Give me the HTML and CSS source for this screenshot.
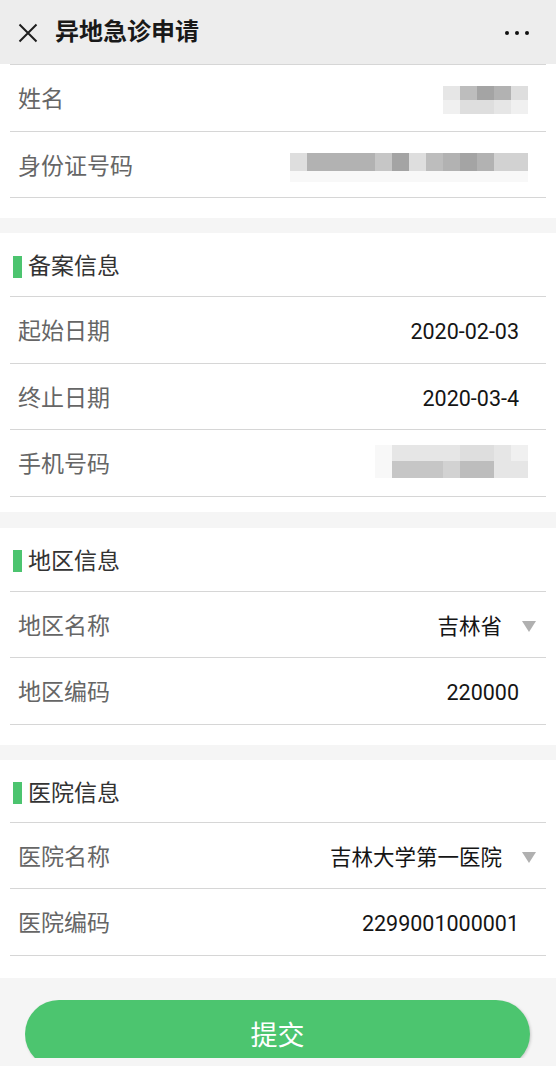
FILE: index.html
```html
<!DOCTYPE html>
<html lang="zh-CN">
<head>
<meta charset="utf-8">
<title>异地急诊申请</title>
<link rel="stylesheet" href="styles.css">
</head>
<body>
<div class="page">
  <header class="topbar">
    <svg class="close" width="20" height="20" viewBox="0 0 20 20"><path d="M1.5 1.5 L18.5 18.5 M18.5 1.5 L1.5 18.5" stroke="#1e1e1e" stroke-width="2" fill="none"/></svg>
    <h1 class="title">异地急诊申请</h1>
    <div class="more"><span class="dot"></span><span class="dot"></span><span class="dot"></span></div>
  </header>

  <section class="section">
    <div class="list list-top">
      <div class="row"><span class="label">姓名</span>
        <div class="blur blur-name">
          <i class="c s9"></i><i class="c s5"></i><i class="c s3"></i><i class="c s4"></i><i class="c s8"></i>
          <i class="c s10"></i><i class="c s8"></i><i class="c s8"></i><i class="c s9"></i><i class="c s10"></i>
        </div>
      </div>
      <div class="row"><span class="label">身份证号码</span>
        <div class="blur blur-id">
          <i class="c s8"></i><i class="c s4"></i><i class="c s4"></i><i class="c s4"></i><i class="c s4"></i><i class="c s6"></i><i class="c s3"></i><i class="c s8"></i><i class="c s5"></i><i class="c s4"></i><i class="c s3"></i><i class="c s4"></i><i class="c s7"></i><i class="c s7"></i>
          <i class="c s11"></i><i class="c s11"></i><i class="c s11"></i><i class="c s11"></i><i class="c s11"></i><i class="c s11"></i><i class="c s11"></i><i class="c s11"></i><i class="c s11"></i><i class="c s11"></i><i class="c s11"></i><i class="c s11"></i><i class="c s11"></i><i class="c s11"></i>
        </div>
      </div>
    </div>
  </section>

  <section class="section section-tight">
    <div class="list">
      <div class="sec-head"><span class="bar"></span><span class="sec-title">备案信息</span></div>
      <div class="row"><span class="label">起始日期</span><span class="value">2020-02-03</span></div>
      <div class="row"><span class="label">终止日期</span><span class="value">2020-03-4</span></div>
      <div class="row"><span class="label">手机号码</span>
        <div class="blur blur-phone">
          <i class="c s11"></i><i class="c s9"></i><i class="c s9"></i><i class="c s9"></i><i class="c s9"></i><i class="c s8"></i><i class="c s8"></i><i class="c s9"></i><i class="c s10"></i>
          <i class="c s11"></i><i class="c s6"></i><i class="c s6"></i><i class="c s6"></i><i class="c s7"></i><i class="c s5"></i><i class="c s5"></i><i class="c s9"></i><i class="c s9"></i>
        </div>
      </div>
    </div>
  </section>

  <section class="section">
    <div class="list">
      <div class="sec-head"><span class="bar"></span><span class="sec-title">地区信息</span></div>
      <div class="row"><span class="label">地区名称</span><span class="value value-select">吉林省<span class="caret"></span></span></div>
      <div class="row"><span class="label">地区编码</span><span class="value">220000</span></div>
    </div>
  </section>

  <section class="section section-last">
    <div class="list">
      <div class="sec-head sec-head-short"><span class="bar"></span><span class="sec-title">医院信息</span></div>
      <div class="row"><span class="label">医院名称</span><span class="value value-select">吉林大学第一医院<span class="caret"></span></span></div>
      <div class="row"><span class="label">医院编码</span><span class="value">2299001000001</span></div>
    </div>
  </section>

  <footer class="footer">
    <div class="btn-clip"><button class="submit" type="button">提交</button></div>
  </footer>
</div>
</body>
</html>
```

FILE: styles.css
```css
* { box-sizing: border-box; margin: 0; padding: 0; }
html, body { background: #f5f5f5; }
body {
  font-family: Roboto, "Noto Sans CJK SC", "Noto Sans", sans-serif;
  width: 556px;
  height: 1066px;
  overflow: hidden;
}
.page { display: flex; flex-direction: column; }

.topbar {
  height: 64px;
  background: #ededed;
  display: flex;
  align-items: center;
  padding: 0 18px;
}
.close { flex: none; margin-top: 1px; }
.title {
  font-size: 24px;
  font-weight: 700;
  color: #191919;
  margin-left: 17px;
  flex: 1;
  line-height: 1;
}
.more { display: flex; gap: 6px; margin-right: 9px; margin-top: 1px; }
.dot { width: 4px; height: 4px; border-radius: 50%; background: #111; }

.section {
  background: #fff;
  padding-bottom: 20px;
  margin-bottom: 15px;
}
.section-tight { padding-bottom: 15px; margin-bottom: 16px; }
.section-last { padding-bottom: 22px; margin-bottom: 0; }

.list { margin: 0 10px; }
.list-top { border-top: 1px solid #d6d6d6; }

.sec-head {
  height: 64px;
  border-bottom: 1px solid #d6d6d6;
  display: flex;
  align-items: center;
  padding-left: 3px;
  padding-top: 4px;
}
.sec-head-short { height: 63px; padding-top: 5px; }
.bar { width: 9px; height: 22px; background: #4cc46f; margin-right: 6px; }
.sec-title { font-size: 23px; color: #333; line-height: 1; }

.row {
  height: 66.5px;
  border-bottom: 1px solid #d6d6d6;
  display: flex;
  align-items: center;
  justify-content: space-between;
  padding: 4px 27px 0 8px;
}
.label { font-size: 23px; color: #666; line-height: 1; }
.value { font-size: 21.5px; color: #151515; line-height: 1; }
.value-select { display: flex; align-items: center; margin-right: -17px; }
.caret {
  width: 0; height: 0;
  border-left: 7px solid transparent;
  border-right: 7px solid transparent;
  border-top: 11px solid #b0b0b0;
  margin-left: 20px;
}

.blur { display: grid; margin-right: -9px; }
.blur .c { display: block; }
.blur-name { grid-template-columns: repeat(5, 17px); grid-template-rows: 14px 14px; margin-top: 0; }
.blur-id { grid-template-columns: repeat(14, 17px); grid-template-rows: 18px 11px; margin-top: 3px; }
.blur-phone { grid-template-columns: repeat(9, 17px); grid-template-rows: 16px 17px; margin-top: -6px; }

.s3 { background: #a4a4a4; }
.s4 { background: #b2b2b2; }
.s5 { background: #bdbdbd; }
.s6 { background: #c6c6c6; }
.s7 { background: #d2d2d2; }
.s8 { background: #dedede; }
.s9 { background: #e6e6e6; }
.s10 { background: #f0f0f0; }
.s11 { background: #f8f8f8; }

.footer { padding: 22px 0 8px 25px; display: flex; }
.btn-clip { height: 58px; overflow: hidden; width: 510px; padding-right: 4px; }
.submit {
  display: block;
  width: 505px;
  height: 68px;
  border: none;
  border-radius: 34px;
  background: #4cc56f;
  color: #fff;
  font-family: "Noto Sans CJK SC", sans-serif;
  font-size: 27px;
  box-shadow: 1px 1px 3px rgba(0,0,0,0.18);
}
```
